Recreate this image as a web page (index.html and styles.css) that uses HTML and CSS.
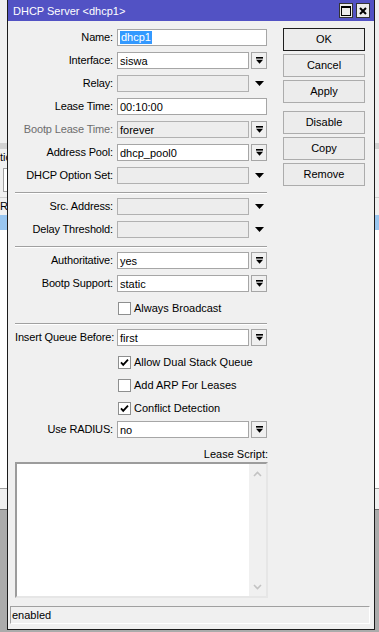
FILE: index.html
```html
<!DOCTYPE html>
<html lang="en">
<head>
    <meta charset="UTF-8">
    <title>DHCP Server &lt;dhcp1&gt;</title>
    <link rel="stylesheet" href="styles.css">
</head>
<body>
    <!-- winbox list window behind the dialog -->
    <div class="desktop">
        <div class="bg-top"></div>
        <div class="bg-tabs"></div>
        <div class="bg-toolbar">
            <span class="bg-tab">tions</span>
            <div class="bg-find"></div>
        </div>
        <div class="bg-head"><span class="bg-col">Relay</span></div>
        <div class="bg-sel"></div>
        <div class="bg-list"></div>
        <div class="bg-foot"></div>
        <div class="bg-desk"></div>
    </div>

    <div class="window">
        <div class="titlebar">
            <span class="title">DHCP Server &lt;dhcp1&gt;</span>
            <span class="tbtn">
                <svg width="10" height="10" viewBox="0 0 10 10"><rect x="0.5" y="0.5" width="9" height="9" fill="none" stroke="#000"/><rect x="0" y="0" width="10" height="2"/></svg>
            </span>
            <span class="tbtn">
                <svg width="8" height="8" viewBox="0 0 8 8"><path d="M1 1l6 6M7 1l-6 6" stroke="#000" stroke-width="2"/></svg>
            </span>
        </div>

        <div class="body">
            <div class="main">
                <div class="form">
                    <div class="row">
                        <span class="label">Name:</span>
                        <div class="ctrl"><div class="input"><span class="sel">dhcp1</span></div></div>
                    </div>
                    <div class="row">
                        <span class="label">Interface:</span>
                        <div class="ctrl">
                            <div class="input">siswa</div>
                            <span class="drop"><svg width="7" height="7" viewBox="0 0 7 7"><rect width="7" height="1.6"/><path d="M0 2.8h7L3.5 6.8z"/></svg></span>
                        </div>
                    </div>
                    <div class="row">
                        <span class="label">Relay:</span>
                        <div class="ctrl">
                            <div class="input off"></div>
                            <span class="arrow"><svg width="9" height="5" viewBox="0 0 9 5"><path d="M0 0h9L4.5 5z"/></svg></span>
                        </div>
                    </div>
                    <div class="row">
                        <span class="label">Lease Time:</span>
                        <div class="ctrl"><div class="input">00:10:00</div></div>
                    </div>
                    <div class="row">
                        <span class="label dim">Bootp Lease Time:</span>
                        <div class="ctrl">
                            <div class="input off">forever</div>
                            <span class="drop"><svg width="7" height="7" viewBox="0 0 7 7"><rect width="7" height="1.6"/><path d="M0 2.8h7L3.5 6.8z"/></svg></span>
                        </div>
                    </div>
                    <div class="row">
                        <span class="label">Address Pool:</span>
                        <div class="ctrl">
                            <div class="input">dhcp_pool0</div>
                            <span class="drop"><svg width="7" height="7" viewBox="0 0 7 7"><rect width="7" height="1.6"/><path d="M0 2.8h7L3.5 6.8z"/></svg></span>
                        </div>
                    </div>
                    <div class="row">
                        <span class="label">DHCP Option Set:</span>
                        <div class="ctrl">
                            <div class="input off"></div>
                            <span class="arrow"><svg width="9" height="5" viewBox="0 0 9 5"><path d="M0 0h9L4.5 5z"/></svg></span>
                        </div>
                    </div>

                    <div class="sep"></div>

                    <div class="row">
                        <span class="label">Src. Address:</span>
                        <div class="ctrl">
                            <div class="input off"></div>
                            <span class="arrow"><svg width="9" height="5" viewBox="0 0 9 5"><path d="M0 0h9L4.5 5z"/></svg></span>
                        </div>
                    </div>
                    <div class="row">
                        <span class="label">Delay Threshold:</span>
                        <div class="ctrl">
                            <div class="input off"></div>
                            <span class="arrow"><svg width="9" height="5" viewBox="0 0 9 5"><path d="M0 0h9L4.5 5z"/></svg></span>
                        </div>
                    </div>

                    <div class="sep"></div>

                    <div class="row">
                        <span class="label">Authoritative:</span>
                        <div class="ctrl">
                            <div class="input">yes</div>
                            <span class="drop"><svg width="7" height="7" viewBox="0 0 7 7"><rect width="7" height="1.6"/><path d="M0 2.8h7L3.5 6.8z"/></svg></span>
                        </div>
                    </div>
                    <div class="row">
                        <span class="label">Bootp Support:</span>
                        <div class="ctrl">
                            <div class="input">static</div>
                            <span class="drop"><svg width="7" height="7" viewBox="0 0 7 7"><rect width="7" height="1.6"/><path d="M0 2.8h7L3.5 6.8z"/></svg></span>
                        </div>
                    </div>
                    <div class="row">
                        <span class="label"></span>
                        <div class="ctrl check">
                            <span class="box"></span>
                            <span class="check-text">Always Broadcast</span>
                        </div>
                    </div>

                    <div class="sep"></div>

                    <div class="row">
                        <span class="label">Insert Queue Before:</span>
                        <div class="ctrl">
                            <div class="input">first</div>
                            <span class="drop"><svg width="7" height="7" viewBox="0 0 7 7"><rect width="7" height="1.6"/><path d="M0 2.8h7L3.5 6.8z"/></svg></span>
                        </div>
                    </div>
                    <div class="row">
                        <span class="label"></span>
                        <div class="ctrl check">
                            <span class="box"><svg width="11" height="11" viewBox="0 0 11 11"><path d="M2 5.4l2.2 2.4L9 2.6" fill="none" stroke="#000" stroke-width="1.8"/></svg></span>
                            <span class="check-text">Allow Dual Stack Queue</span>
                        </div>
                    </div>
                    <div class="row">
                        <span class="label"></span>
                        <div class="ctrl check">
                            <span class="box"></span>
                            <span class="check-text">Add ARP For Leases</span>
                        </div>
                    </div>
                    <div class="row">
                        <span class="label"></span>
                        <div class="ctrl check">
                            <span class="box"><svg width="11" height="11" viewBox="0 0 11 11"><path d="M2 5.4l2.2 2.4L9 2.6" fill="none" stroke="#000" stroke-width="1.8"/></svg></span>
                            <span class="check-text">Conflict Detection</span>
                        </div>
                    </div>
                    <div class="row">
                        <span class="label">Use RADIUS:</span>
                        <div class="ctrl">
                            <div class="input">no</div>
                            <span class="drop"><svg width="7" height="7" viewBox="0 0 7 7"><rect width="7" height="1.6"/><path d="M0 2.8h7L3.5 6.8z"/></svg></span>
                        </div>
                    </div>
                </div>

                <div class="buttons">
                    <span class="btn default">OK</span>
                    <span class="btn">Cancel</span>
                    <span class="btn">Apply</span>
                    <span class="btn spaced">Disable</span>
                    <span class="btn">Copy</span>
                    <span class="btn">Remove</span>
                </div>
            </div>

            <div class="script-label">Lease Script:</div>
            <div class="textarea">
                <div class="vscroll">
                    <svg width="9" height="6" viewBox="0 0 9 6"><path d="M1 5l3.5-3.5L8 5" fill="none" stroke="#c3c3c3" stroke-width="1.6"/></svg>
                    <svg width="9" height="6" viewBox="0 0 9 6"><path d="M1 1l3.5 3.5L8 1" fill="none" stroke="#c3c3c3" stroke-width="1.6"/></svg>
                </div>
            </div>
        </div>

        <div class="status">enabled</div>
    </div>
</body>
</html>
```

FILE: styles.css
```css
* {
    margin: 0;
    padding: 0;
    box-sizing: border-box;
}

body {
    width: 379px;
    height: 632px;
    overflow: hidden;
    position: relative;
    background: #ababab;
    color: #000;
    font-family: "Liberation Sans", Arial, sans-serif;
    font-size: 11px;
}

/* background window */
.desktop {
    display: flex;
    flex-direction: column;
    height: 100%;
}

.bg-top {
    height: 143px;
    background: #f0f0f0;
}

.bg-tabs {
    height: 6px;
    background: #d2d2d2;
}

.bg-toolbar {
    height: 48px;
    background: #f0f0f0;
    padding-top: 2px;
}

.bg-tab {
    display: block;
    line-height: 13px;
}

.bg-find {
    width: 40px;
    height: 24px;
    margin: 4px 0 0 3px;
    background: #fff;
    border: 1px solid #a0a0a0;
}

.bg-head {
    height: 18px;
    background: #f0f0f0;
    border-top: 1px solid #d0d0d0;
    line-height: 16px;
}

.bg-sel {
    height: 15px;
    background: #99c6f0;
}

.bg-list {
    height: 258px;
    background: #fff;
}

.bg-foot {
    height: 22px;
    background: #f0f0f0;
    border-top: 1px solid #a0a0a0;
    border-bottom: 1px solid #6e6e6e;
}

.bg-desk {
    flex: 1;
    background: #ababab;
}

/* dialog window */
.window {
    position: absolute;
    left: 7px;
    top: 0;
    width: 368px;
    height: 630px;
    display: flex;
    flex-direction: column;
    background: #f0f0f0;
    border: 1px solid #1c1c1c;
    border-top: 0;
}

.titlebar {
    height: 21px;
    display: flex;
    align-items: center;
    gap: 3px;
    padding: 0 4px 0 5px;
    background: #5252c4;
    color: #fff;
}

.title {
    flex: 1;
    font-size: 11px;
}

.tbtn {
    width: 14px;
    height: 15px;
    display: flex;
    align-items: center;
    justify-content: center;
    background: #ececec;
    border: 1px solid #333;
}

.body {
    flex: 1;
    padding: 8px 0 0 7px;
}

.main {
    display: flex;
}

.form {
    width: 252px;
    display: flex;
    flex-direction: column;
}

.row {
    display: flex;
    height: 17px;
    margin-bottom: 6px;
}

.label {
    width: 98px;
    text-align: right;
    line-height: 17px;
    letter-spacing: -0.15px;
    white-space: nowrap;
}

.label.dim {
    color: #6d6d6d;
}

.ctrl {
    width: 150px;
    margin-left: 4px;
    display: flex;
}

.input {
    flex: 1;
    height: 17px;
    display: flex;
    align-items: center;
    padding-left: 2px;
    background: #fff;
    border: 1px solid #a6a6a6;
    white-space: nowrap;
}

.input.off {
    background: #ededed;
    border-color: #b1b1b1;
}

.sel {
    height: 13px;
    line-height: 13px;
    padding: 0 1px;
    background: #3399ff;
    color: #fff;
}

.drop {
    width: 16px;
    height: 17px;
    margin-left: 2px;
    display: flex;
    align-items: center;
    justify-content: center;
    background: #f0f0f0;
    border: 1px solid #a6a6a6;
}

.arrow {
    width: 16px;
    margin-left: 2px;
    display: flex;
    align-items: center;
    justify-content: center;
}

.ctrl.check {
    align-items: flex-end;
}

.box {
    width: 13px;
    height: 13px;
    margin-left: 1px;
    display: flex;
    align-items: center;
    justify-content: center;
    background: #fff;
    border: 1px solid #8e8f8f;
}

.check-text {
    margin-left: 3px;
    line-height: 13px;
    white-space: nowrap;
}

.sep {
    width: 252px;
    height: 2px;
    margin: 2px 0 4px;
    border-top: 1px solid #a0a0a0;
    border-bottom: 1px solid #fff;
}

.buttons {
    width: 82px;
    margin: -1px 0 0 16px;
    display: flex;
    flex-direction: column;
    gap: 3px;
}

.btn {
    height: 23px;
    line-height: 21px;
    text-align: center;
    background: #ececec;
    border: 1px solid #acacac;
}

.btn.default {
    border-color: #1e1e1e;
}

.btn.spaced {
    margin-top: 5px;
}

.script-label {
    width: 253px;
    margin-top: 3px;
    line-height: 14px;
    text-align: right;
}

.textarea {
    width: 253px;
    height: 136px;
    margin-top: 1px;
    display: flex;
    justify-content: flex-end;
    background: #fff;
    border: 2px solid;
    border-color: #9c9c9c #e6e6e6 #e6e6e6 #9c9c9c;
}

.vscroll {
    width: 17px;
    display: flex;
    flex-direction: column;
    align-items: center;
    justify-content: space-between;
    padding: 7px 0 6px;
    background: #f0f0f0;
}

.status {
    height: 18px;
    margin: 0 4px 5px 2px;
    padding-left: 1px;
    line-height: 16px;
    border: 1px solid;
    border-color: #a0a0a0 #fff #fff #a0a0a0;
}
```
